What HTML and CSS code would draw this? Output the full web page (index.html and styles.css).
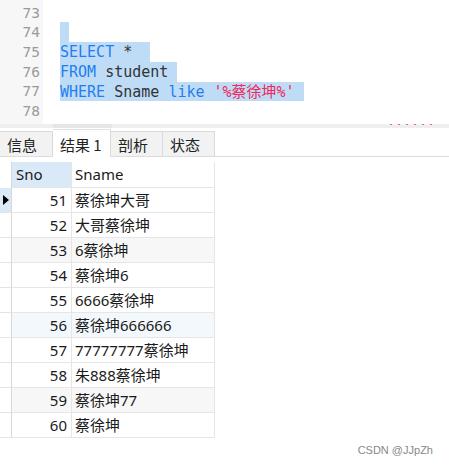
FILE: index.html
```html
<!DOCTYPE html>
<html>
<head>
<meta charset="utf-8">
<link rel="stylesheet" href="styles.css">
</head>
<body>
<div class="editor">
  <div class="gutter">
    <div class="ln">73</div>
    <div class="ln">74</div>
    <div class="ln">75</div>
    <div class="ln">76</div>
    <div class="ln">77</div>
    <div class="ln">78</div>
  </div>
  <div class="code">
    <div class="line"></div>
    <div class="line"><span class="sel"></span></div>
    <div class="line"><span class="sel"><span class="kw">SELECT</span> *&nbsp;</span></div>
    <div class="line"><span class="sel"><span class="kw">FROM</span> student</span></div>
    <div class="line"><span class="sel"><span class="kw">WHERE</span> Sname <span class="kw">like</span> <span class="str">'%蔡徐坤%'</span></span></div>
    <div class="line"></div>
  </div>
</div>
<div class="hscroll"><div class="thumb"></div><div class="marks"><i></i><i></i><i></i><i></i><i></i><i></i></div></div>
<div class="tabs">
  <div class="tab">信息</div>
  <div class="tab active">结果 1</div>
  <div class="tab">剖析</div>
  <div class="tab">状态</div>
  <div class="tabfill"></div>
</div>
<div class="grid">
  <div class="ind head"></div><div class="cell h sno-h">Sno</div><div class="cell h">Sname</div>
  <div class="ind cur"><span class="arrow"></span></div><div class="cell num">51</div><div class="cell">蔡徐坤大哥</div>
  <div class="ind"></div><div class="cell num">52</div><div class="cell">大哥蔡徐坤</div>
  <div class="ind"></div><div class="cell num g">53</div><div class="cell g">6蔡徐坤</div>
  <div class="ind"></div><div class="cell num">54</div><div class="cell">蔡徐坤6</div>
  <div class="ind"></div><div class="cell num">55</div><div class="cell">6666蔡徐坤</div>
  <div class="ind"></div><div class="cell num b">56</div><div class="cell b">蔡徐坤666666</div>
  <div class="ind"></div><div class="cell num">57</div><div class="cell">77777777蔡徐坤</div>
  <div class="ind"></div><div class="cell num">58</div><div class="cell">朱888蔡徐坤</div>
  <div class="ind"></div><div class="cell num g">59</div><div class="cell g">蔡徐坤77</div>
  <div class="ind"></div><div class="cell num">60</div><div class="cell">蔡徐坤</div>
</div>
<div class="wm">CSDN @JJpZh</div>
</body>
</html>
```
FILE: styles.css
```css
html, body {
  margin: 0;
  padding: 0;
  background: #fff;
  width: 449px;
  height: 465px;
  overflow: hidden;
}
.editor {
  display: flex;
  height: 124px;
}
.gutter {
  width: 43px;
  background: #f7f7f7;
  padding-top: 3.5px;
  box-sizing: border-box;
  padding-right: 3px;
  text-align: right;
  font-family: "DejaVu Sans Mono", monospace;
  font-size: 14.5px;
  color: #9a9a9a;
}
.ln {
  height: 19.7px;
  line-height: 19.7px;
}
.code {
  padding-top: 2.8px;
  padding-left: 17px;
  font-family: "DejaVu Sans Mono", "Noto Sans CJK SC", monospace;
  font-size: 15px;
  color: #333;
}
.line {
  height: 19.7px;
  line-height: 19.7px;
  white-space: pre;
}
.sel {
  display: inline-block;
  height: 19.7px;
  line-height: 21.5px;
  vertical-align: top;
  background: #bfdcf7;
  padding-right: 9px;
}
.kw { color: #1f7ff0; }
.str { color: #f0285a; }
.hscroll {
  height: 4px;
  background: #efefef;
  display: flex;
  position: relative;
}
.thumb {
  margin-left: 53px;
  width: 59px;
  background: #e6e6e6;
}
.marks {
  position: absolute;
  top: 0;
  left: 390px;
  display: flex;
  gap: 6px;
}
.marks i {
  display: block;
  width: 2px;
  height: 1px;
  background: #f06a6a;
}
.tabs {
  display: flex;
  align-items: flex-end;
  height: 29px;
  box-sizing: border-box;
  border-bottom: 1px solid #dcdcdc;
  background: #fff;
}
.tab {
  height: 25px;
  box-sizing: border-box;
  background: #f2f2f2;
  border: 1px solid #dadada;
  border-bottom: none;
  border-left: none;
  width: 52px;
  padding-left: 7px;
  font-family: "Noto Sans CJK SC", sans-serif;
  font-size: 15px;
  line-height: 25px;
  color: #222;
}
.tab:first-child { width: 53px; }
.tab.active {
  background: #fff;
  height: 28px;
  width: 58px;
  line-height: 29px;
  padding-left: 7px;
  margin-bottom: -1px;
  border-top-color: #e2e2e2;
}
.tabfill { flex: 1; }
.grid {
  margin-top: 5px;
  display: grid;
  grid-template-columns: 12px 60px 143px;
  grid-auto-rows: 25px;
  grid-template-rows: 26px;
  font-family: "Noto Sans", "Noto Sans CJK SC", sans-serif;
  font-size: 15px;
  color: #1a1a1a;
}
.ind {
  border-right: 1px solid #d8d8d8;
  border-bottom: 1px solid #e4e4e4;
  box-sizing: border-box;
  position: relative;
}
.ind.head { border-bottom: none; }
.ind.cur { background: #dbe9f7; }
.arrow {
  position: absolute;
  left: 3px;
  top: 7px;
  width: 0;
  height: 0;
  border-top: 5.5px solid transparent;
  border-bottom: 5.5px solid transparent;
  border-left: 6px solid #000;
}
.cell {
  box-sizing: border-box;
  border-right: 1px solid #e6e6e6;
  border-bottom: 1px solid #e6e6e6;
  padding-left: 3px;
  line-height: 25px;
  white-space: nowrap;
  overflow: hidden;
}
.cell.h {
  line-height: 25px;
  padding-left: 3px;
}
.cell.sno-h {
  background: #d9e9f8;
  padding-left: 4px;
}
.cell.num {
  text-align: right;
  padding-right: 4px;
  padding-left: 0;
}
.cell.g { background: #f7f7f7; }
.cell.b { background: #f3f8fd; }
.wm {
  text-align: right;
  padding-right: 16px;
  margin-top: 6px;
  font-family: "Liberation Sans", sans-serif;
  font-size: 11px;
  color: #888;
}
```
